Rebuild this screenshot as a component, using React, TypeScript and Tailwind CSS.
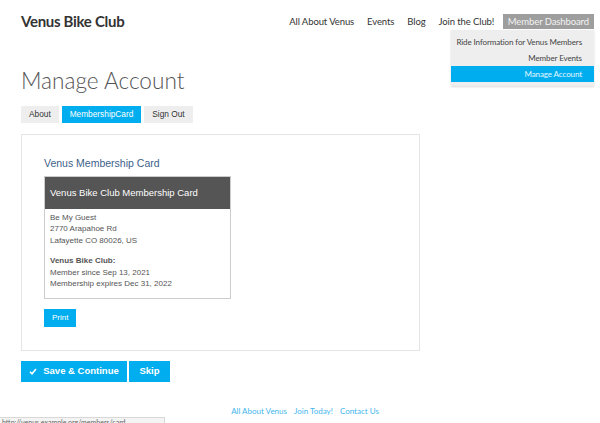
import React from 'react';

const navLinks = ['All About Venus', 'Events', 'Blog', 'Join the Club!'];
const dropdownItems = ['Ride Information for Venus Members', 'Member Events', 'Manage Account'];

const Header: React.FC = () => {
  return (
    <div className="flex items-start justify-between pl-[21px] pr-[6px] pt-[14px]">
      <div className="text-[15px] font-bold leading-[15px] tracking-[-0.3px] text-[#333]">Venus Bike Club</div>
      <nav className="relative flex items-center text-[9.5px] tracking-[-0.1px] text-[#333]">
        {navLinks.map((l) => (
          <span key={l} className="whitespace-nowrap px-[6.5px] leading-[15px]">{l}</span>
        ))}
        <span className="ml-[2px] whitespace-nowrap bg-[#9e9e9e] px-[5px] leading-[15px] text-[#f3f3f3]">Member Dashboard</span>
        <div className="absolute right-0 top-[16px] w-[143px] bg-[#eeeeee] pb-[4px] pt-[4px] shadow-[0_1px_2px_rgba(0,0,0,0.15)]">
          {dropdownItems.map((d) => (
            <div
              key={d}
              className={`h-[16px] whitespace-nowrap pr-[12px] text-right text-[8px] tracking-[-0.1px] leading-[16px] ${
                d === 'Manage Account' ? 'bg-[#00aeef] text-[#e8f7ff]' : 'text-[#444]'
              }`}
            >
              {d}
            </div>
          ))}
        </div>
      </nav>
    </div>
  );
};

const Tabs: React.FC = () => {
  const tabs = ['About', 'MembershipCard', 'Sign Out'];
  return (
    <div className="flex gap-[3px]">
      {tabs.map((t) => (
        <span
          key={t}
          className={`h-[17px] px-[8px] text-[8.3px] leading-[17px] ${
            t === 'MembershipCard' ? 'bg-[#00aeef] text-white' : 'bg-[#eeeeee] text-[#333]'
          }`}
        >
          {t}
        </span>
      ))}
    </div>
  );
};

const MembershipCard: React.FC = () => {
  return (
    <div className="w-[187px] border border-[#cccccc]">
      <div className="h-[32px] bg-[#555555] pl-[5px] text-[9.5px] leading-[32px] text-white">
        Venus Bike Club Membership Card
      </div>
      <div className="px-[5px] pb-[9px] pt-[3px] text-[8px] leading-[11.4px] text-[#555]">
        <div>Be My Guest</div>
        <div>2770 Arapahoe Rd</div>
        <div>Lafayette CO 80026, US</div>
        <div className="mt-[9px] font-bold">Venus Bike Club:</div>
        <div>Member since Sep 13, 2021</div>
        <div>Membership expires Dec 31, 2022</div>
      </div>
    </div>
  );
};

export default function App() {
  return (
    <div className="relative h-[423px] w-[600px] overflow-hidden bg-white font-['Lato',sans-serif]">
      <Header />
      <div className="pl-[21px]">
        <h1 className="mt-[39px] text-[22.6px] font-light leading-[26px] text-[#555]">Manage Account</h1>
        <div className="mt-[12px] font-['Liberation_Sans',sans-serif]">
          <Tabs />
          <div className="mt-[11px] h-[217px] w-[399px] border border-[#e5e5e5] pl-[22px] pt-[21px]">
            <div className="text-[10.5px] leading-[14px] text-[#3d5f8a]">Venus Membership Card</div>
            <div className="mt-[6px]">
              <MembershipCard />
            </div>
            <button className="mt-[10px] h-[18px] bg-[#00aeef] px-[8px] text-[8px] text-white">Print</button>
          </div>
          <div className="mt-[10px] flex gap-[2px]">
            <button className="flex h-[21px] w-[106px] items-center justify-center gap-[6px] bg-[#00aeef] text-[9.5px] font-bold text-white">
              <svg width="8" height="7" viewBox="0 0 8 7" fill="none">
                <path d="M1 3.8 L3 5.8 L7 1" stroke="white" strokeWidth="1.6" />
              </svg>
              Save &amp; Continue
            </button>
            <button className="h-[21px] w-[41px] bg-[#00aeef] text-[9.5px] font-bold text-white">Skip</button>
          </div>
        </div>
      </div>
      <div className="mt-[23px] flex justify-center gap-[7px] pl-[10px] text-[8px] leading-[12px] text-[#3fb6ee]">
        <span>All About Venus</span>
        <span>Join Today!</span>
        <span>Contact Us</span>
      </div>
      <div className="absolute bottom-0 left-0 h-[6px] w-[165px] overflow-hidden whitespace-nowrap border-r border-t border-[#d8d8d8] bg-[#f4f4f4] pl-[2px] text-[7px] leading-[8px] text-[#666]">
        http://venus.example.org/members/card
      </div>
    </div>
  );
}
